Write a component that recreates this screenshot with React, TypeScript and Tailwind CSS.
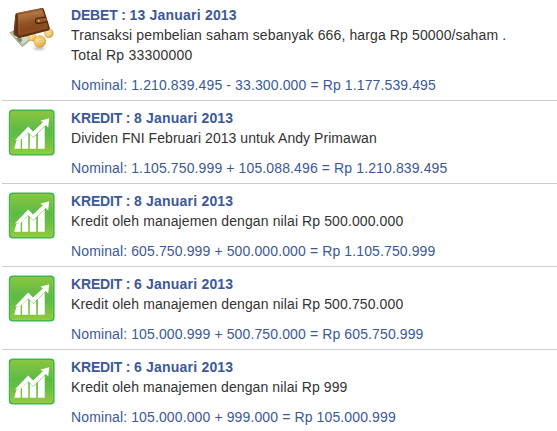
type Entry = {
  kind: 'DEBET' | 'KREDIT'
  date: string
  lines: { text: string; tracking: string }[]
  nominal: string
}

const entries: Entry[] = [
  {
    kind: 'DEBET',
    date: '13 Januari 2013',
    lines: [
      { text: 'Transaksi pembelian saham sebanyak 666, harga Rp 50000/saham .', tracking: 'tracking-[0.125px]' },
      { text: 'Total Rp 33300000', tracking: 'tracking-[0.24px]' },
    ],
    nominal: '1.210.839.495 - 33.300.000 = Rp 1.177.539.495',
  },
  {
    kind: 'KREDIT',
    date: '8 Januari 2013',
    lines: [{ text: 'Dividen FNI Februari 2013 untuk Andy Primawan', tracking: 'tracking-[0.05px]' }],
    nominal: '1.105.750.999 + 105.088.496 = Rp 1.210.839.495',
  },
  {
    kind: 'KREDIT',
    date: '8 Januari 2013',
    lines: [{ text: 'Kredit oleh manajemen dengan nilai Rp 500.000.000', tracking: 'tracking-[0.11px]' }],
    nominal: '605.750.999 + 500.000.000 = Rp 1.105.750.999',
  },
  {
    kind: 'KREDIT',
    date: '6 Januari 2013',
    lines: [{ text: 'Kredit oleh manajemen dengan nilai Rp 500.750.000', tracking: 'tracking-[0.11px]' }],
    nominal: '105.000.999 + 500.750.000 = Rp 605.750.999',
  },
  {
    kind: 'KREDIT',
    date: '6 Januari 2013',
    lines: [{ text: 'Kredit oleh manajemen dengan nilai Rp 999', tracking: 'tracking-[0.1px]' }],
    nominal: '105.000.000 + 999.000 = Rp 105.000.999',
  },
]

function WalletIcon() {
  return (
    <svg className="block h-12 w-12" viewBox="8 4 48 48">
      <defs>
        <linearGradient id="leather" x1="0" y1="0" x2="0.2" y2="1">
          <stop offset="0" stopColor="#8f5427" />
          <stop offset="0.25" stopColor="#b0733f" />
          <stop offset="0.6" stopColor="#8d4f20" />
          <stop offset="1" stopColor="#80451a" />
        </linearGradient>
        <radialGradient id="coin" cx="0.4" cy="0.35" r="0.75">
          <stop offset="0" stopColor="#ffe8a4" />
          <stop offset="0.6" stopColor="#f0c162" />
          <stop offset="1" stopColor="#cb9236" />
        </radialGradient>
        <filter id="soft" x="-30%" y="-80%" width="160%" height="260%">
          <feGaussianBlur stdDeviation="1.2" />
        </filter>
      </defs>
      <ellipse cx="39" cy="48.3" rx="5.5" ry="1.8" fill="#777" opacity="0.45" filter="url(#soft)" />
      <path d="M9.8 32.6 L16 30 L34 37 L22.3 46.8 Z" fill="#b9c4ae" stroke="#7f8e77" strokeWidth="0.6" />
      <path d="M12.3 33.3 L16 32 L31 38 L22.1 45 Z" fill="#d3dcc9" stroke="#8c9b84" strokeWidth="0.5" />
      <ellipse cx="19.5" cy="39.6" rx="3" ry="2" transform="rotate(40 19.5 39.6)" fill="#7e8f76" />
      <circle cx="32.2" cy="37.3" r="4" fill="url(#coin)" />
      <circle cx="48.9" cy="33.4" r="4.4" fill="url(#coin)" stroke="#c08a30" strokeWidth="0.4" />
      <path d="M15.3 14.8 Q15.3 13.5 16.8 13 L41.7 8 Q43.3 7.8 43.9 9.2 L49.8 27.8 Q50.2 29.8 48.4 30.4 L20.5 37.8 Q19 38.1 17.7 37.3 L14.3 35 Q13.4 34.3 13.5 33 Z" fill="#5a2c0f" />
      <path d="M17.7 14 L42.5 9.1 L48.8 28.7 L19.6 36 L17.6 33.8 Z" fill="url(#leather)" stroke="#6b3413" strokeWidth="0.5" />
      <path d="M16.6 13.6 L42.3 8.7" stroke="#c18d5e" strokeWidth="0.6" />
      <path d="M19.3 15.6 L41.3 11.2 L46.8 27.6 L19.6 34.2 Z" fill="none" stroke="#bf8354" strokeWidth="0.4" strokeDasharray="0.8 0.5" opacity="0.7" />
      <path d="M15.9 15 L14.5 33.4 L19.3 36.8" fill="none" stroke="#925325" strokeWidth="0.6" />
      <path d="M17.8 35.4 L20 36.5 L49 29.1" fill="none" stroke="#6b3612" strokeWidth="0.9" />
      <path d="M46 17.1 L38 18 Q35.1 18.5 35.3 21.1 Q35.9 23.9 39 23.5 L47.2 21.6" fill="#985829" stroke="#4b210a" strokeWidth="1.1" />
      <circle cx="38.8" cy="20.8" r="1.5" fill="#deab79" stroke="#52250b" strokeWidth="0.5" />
      <circle cx="39.8" cy="41.5" r="5.9" fill="url(#coin)" stroke="#c9933b" strokeWidth="0.5" />
      <path d="M37 39.2 Q38.5 37.2 41.5 38.2 M38.5 41 L41.5 40 M39 42.8 L42.5 43 M36.8 43.7 Q39 46 42 45" fill="none" stroke="#d6a24e" strokeWidth="0.6" />
    </svg>
  )
}

function ChartIcon() {
  return (
    <svg className="block h-12 w-12" viewBox="8 108 48 48">
      <defs>
        <linearGradient id="leaf" x1="0" y1="0" x2="0" y2="1">
          <stop offset="0" stopColor="#8cc63f" />
          <stop offset="0.45" stopColor="#5dba46" />
          <stop offset="0.6" stopColor="#64bd44" />
          <stop offset="1" stopColor="#96ca3e" />
        </linearGradient>
      </defs>
      <rect x="9.6" y="110.4" width="44.2" height="44.4" rx="3.2" fill="url(#leaf)" stroke="#3fb54c" strokeWidth="1.6" />
      <rect x="10.7" y="111.5" width="42" height="42.2" rx="2.3" fill="none" stroke="#a6d75e" strokeWidth="0.6" opacity="0.5" />
      <path
        d="M15 140.3 L28.2 126.6 L33 131.6 L43 122.2 L40.3 120.8 L49.2 118.3 L48.2 127.5 L45.8 125 L33.2 137.2 L28.2 132.2 L20 140.5 Z"
        fill="#fff"
      />
      <path
        d="M16.4 140.8 L20.7 140 L20.6 148.8 L14.3 148.8 Z M22.1 138.6 L28.2 132.8 L28.3 148.8 L22.1 148.8 Z M29.8 134.3 L33.2 137.7 L36.2 134.9 L36.2 148.8 L29.8 148.8 Z M37.9 133.2 L44.7 126.5 L44.7 148.8 L37.9 148.8 Z"
        fill="#fff"
      />
    </svg>
  )
}

export default function App() {
  return (
    <main className="h-[431px] w-[557px] overflow-hidden bg-white pl-0.5 font-['Liberation_Sans',Arial,sans-serif] text-sm leading-5 text-[#333]">
      {entries.map((entry, i) => (
        <article
          key={i}
          className="flex gap-[15px] border-t border-[#ccc] pt-[7px] pb-[5px] pl-1.5 first:border-t-0 first:pt-[5px]"
        >
          <div className={entry.kind === 'DEBET' ? '-mt-px w-12 shrink-0' : 'w-12 shrink-0'}>
            {entry.kind === 'DEBET' ? <WalletIcon /> : <ChartIcon />}
          </div>
          <div className="whitespace-nowrap">
            <h2 className="font-bold tracking-[0.2px] text-[#3b5998]">
              <span className="tracking-[-0.17px]">{entry.kind} : </span>
              {entry.date}
            </h2>
            {entry.lines.map((line) => (
              <p key={line.text} className={line.tracking}>
                {line.text}
              </p>
            ))}
            <p className="mt-2.5 tracking-[0.12px] text-[#3b5998]">Nominal: {entry.nominal}</p>
          </div>
        </article>
      ))}
    </main>
  )
}
